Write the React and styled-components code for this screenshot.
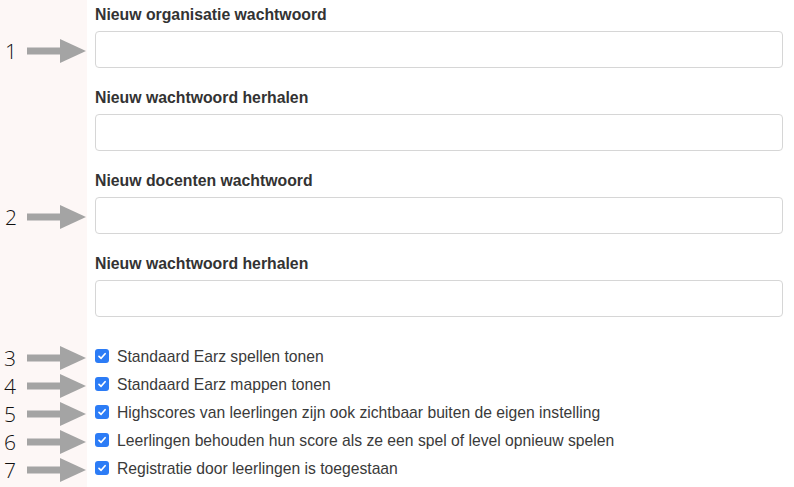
import React from "react";
import styled, { createGlobalStyle } from "styled-components";

const Global = createGlobalStyle`
  html, body { margin: 0; padding: 0; background: #fff; }
  body { font-family: "Liberation Sans", Arial, sans-serif; }
  * { box-sizing: border-box; }
`;

const Page = styled.div`
  width: 794px;
  height: 487px;
  overflow: hidden;
  padding-top: 6px;
  background: linear-gradient(to right, #fdf7f6 0, #fdf7f6 87px, #ffffff 87px);
`;

const Row = styled.div`
  display: flex;
  align-items: center;
`;

const Marker = styled.div`
  width: 87px;
  flex: 0 0 87px;
  display: flex;
  align-items: center;
  padding-left: ${(p) => p.$pad || 0}px;
  padding-top: ${(p) => p.$drop || 0}px;
  gap: ${(p) => p.$gap || 0}px;
`;

const Num = styled.span`
  font-family: "Open Sans", "Liberation Sans", sans-serif;
  font-weight: 300;
  font-size: 21px;
  line-height: 22px;
  color: #111;
  width: 14px;
`;

const Content = styled.div`
  flex: 1;
  padding: 0 11px 0 8px;
`;

const Label = styled.div`
  font-size: 15.8px;
  font-weight: bold;
  color: #333;
  line-height: 17px;
  margin-bottom: 8px;
`;

const Field = styled.div`
  margin-bottom: 21px;
`;

const Input = styled.input`
  display: block;
  width: 100%;
  height: 37px;
  border: 1px solid #d6d6d6;
  border-radius: 4px;
  background: #fff;
  outline: none;
`;

const Checks = styled.div`
  margin-top: 25px;
`;

const CheckRow = styled(Row)`
  height: 28px;
`;

const Box = styled.span`
  width: 14px;
  height: 14px;
  border-radius: 3px;
  background: #2c7cf6;
  display: inline-flex;
  align-items: center;
  justify-content: center;
  margin-right: 8px;
  flex: 0 0 14px;
`;

const CheckLabel = styled.label`
  display: flex;
  align-items: center;
  font-size: 15.7px;
  color: #3a3a3a;
  line-height: 17px;
`;

const Arrow = () => (
  <svg width="59" height="24" viewBox="0 0 59 24">
    <rect x="0" y="8.5" width="34" height="7" fill="#a4a4a4" />
    <polygon points="33,0 59,12 33,24" fill="#a4a4a4" />
  </svg>
);

const Tick = () => (
  <svg width="10" height="10" viewBox="0 0 10 10">
    <path d="M2 5.3 L4.1 7.3 L8.1 2.7" fill="none" stroke="#fff" strokeWidth="1.7" strokeLinecap="round" strokeLinejoin="round" />
  </svg>
);

const fields = [
  { label: "Nieuw organisatie wachtwoord", n: "1" },
  { label: "Nieuw wachtwoord herhalen" },
  { label: "Nieuw docenten wachtwoord", n: "2" },
  { label: "Nieuw wachtwoord herhalen" },
];

const checks = [
  "Standaard Earz spellen tonen",
  "Standaard Earz mappen tonen",
  "Highscores van leerlingen zijn ook zichtbaar buiten de eigen instelling",
  "Leerlingen behouden hun score als ze een spel of level opnieuw spelen",
  "Registratie door leerlingen is toegestaan",
];

export default function App() {
  return (
    <Page>
      <Global />
      {fields.map((f, i) => (
        <Field key={i}>
          <Row>
            <Marker />
            <Content>
              <Label>{f.label}</Label>
            </Content>
          </Row>
          <Row>
            <Marker $pad={5} $gap={8} $drop={3}>
              {f.n && (
                <>
                  <Num>{f.n}</Num>
                  <Arrow />
                </>
              )}
            </Marker>
            <Content>
              <Input type="password" />
            </Content>
          </Row>
        </Field>
      ))}
      <Checks>
        {checks.map((c, i) => (
          <CheckRow key={i}>
            <Marker $pad={4} $gap={9} $drop={4}>
              <Num>{i + 3}</Num>
              <Arrow />
            </Marker>
            <Content>
              <CheckLabel>
                <Box>
                  <Tick />
                </Box>
                {c}
              </CheckLabel>
            </Content>
          </CheckRow>
        ))}
      </Checks>
    </Page>
  );
}
